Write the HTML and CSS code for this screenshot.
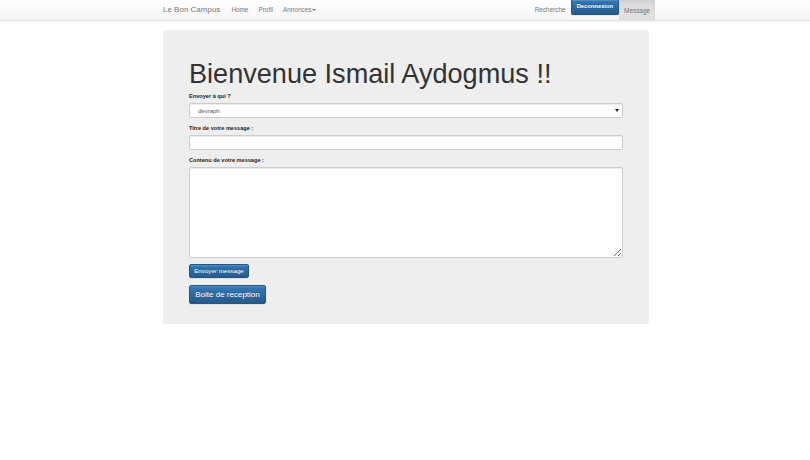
FILE: index.html
```
<!DOCTYPE html>
<html lang="fr">
<head>
    <meta charset="UTF-8">
    <title>Message - Le Bon Campus</title>
    <link rel="stylesheet" href="styles.css">
</head>
<body>

<!-- Navbar -->
<header class="navbar">
    <div class="container nav-inner">
        <a class="brand" href="#">Le Bon Campus</a>
        <nav class="menu">
            <a href="#">Home</a>
            <a href="#">Profil</a>
            <a href="#" class="dropdown">Annonces<span class="caret"></span></a>
        </nav>
        <nav class="menu menu-right">
            <a href="#">Recherche</a>
            <a href="#" class="btn btn-primary btn-logout">Deconnexion</a>
            <a href="#" class="active">Message</a>
        </nav>
    </div>
</header>

<!-- Message form -->
<div class="container">
    <div class="jumbotron">
        <h1>Bienvenue Ismail Aydogmus !!</h1>
        <form>
            <div class="form-group">
                <label for="dest">Envoyer à qui ?</label>
                <div class="select-wrap">
                    <select id="dest" class="form-control">
                        <option>devraph</option>
                    </select>
                </div>
            </div>
            <div class="form-group">
                <label for="titre">Titre de votre message :</label>
                <input type="text" id="titre" class="form-control">
            </div>
            <div class="form-group">
                <label for="contenu">Contenu de votre message :</label>
                <textarea id="contenu" class="form-control"></textarea>
            </div>
            <button type="button" class="btn btn-primary btn-sm">Envoyer message</button>
        </form>
        <a href="#" class="btn btn-primary btn-md">Boite de reception</a>
    </div>
</div>

</body>
</html>
```

FILE: styles.css
```
* {
    margin: 0;
    padding: 0;
    box-sizing: border-box;
}

body {
    font-family: "Liberation Sans", Arial, sans-serif;
    color: #333;
    background: #fff;
}

a {
    text-decoration: none;
}

.container {
    width: 488px;
    padding-left: 2px;
    margin: 0 auto;
}

/* Navbar */
.navbar {
    height: 21px;
    background: linear-gradient(to bottom, #fff 0%, #f5f5f5 100%);
    border-bottom: 1px solid #e4e4e4;
    box-shadow: 0 1px 3px rgba(0, 0, 0, 0.06);
}

.nav-inner {
    display: flex;
    align-items: stretch;
    height: 20px;
}

.brand {
    color: #777;
    font-size: 8px;
    line-height: 20px;
    margin-right: 6px;
}

.menu {
    display: flex;
    align-items: stretch;
}

.menu a {
    color: #777;
    font-size: 6.4px;
    line-height: 20px;
    padding: 0 5px;
}

.menu-right {
    margin-left: auto;
    margin-right: -6px;
}

.menu-right a {
    padding: 0 5px;
}

.caret {
    display: inline-block;
    margin-left: 1px;
    vertical-align: middle;
    border-top: 2px solid #777;
    border-left: 2px solid transparent;
    border-right: 2px solid transparent;
}

.menu .btn-logout {
    color: #fff;
    font-weight: bold;
    font-size: 5.8px;
    line-height: 13px;
    height: 15px;
    padding: 0 5px;
    border-radius: 0 0 2px 2px;
    border-top: none;
}

.menu .active {
    padding: 0 5px;
    background: linear-gradient(to bottom, #dbdbdb 0%, #e2e2e2 100%);
    box-shadow: inset 0 2px 4px rgba(0, 0, 0, 0.06);
    line-height: 22px;
}

/* Jumbotron */
.jumbotron {
    margin-top: 9px;
    background: #eee;
    border-radius: 3px;
    padding: 29px 26px 20px;
}

.jumbotron h1 {
    font-size: 27.1px;
    font-weight: normal;
    line-height: 30px;
    margin-bottom: 3px;
    color: #333;
    white-space: nowrap;
}

.form-group {
    margin-bottom: 6px;
}

label {
    display: block;
    font-size: 5.6px;
    font-weight: bold;
    line-height: 9px;
    margin-bottom: 2px;
    color: #222;
}

.form-control {
    display: block;
    width: 100%;
    height: 15px;
    border: 1px solid #ccc;
    border-radius: 2px;
    background: #fff;
    box-shadow: inset 0 1px 1px rgba(0, 0, 0, 0.075);
    font-family: "Liberation Sans", Arial, sans-serif;
    font-size: 6px;
    color: #555;
    padding: 0 8px;
    outline: none;
}

select.form-control {
    appearance: none;
    -webkit-appearance: none;
}

.select-wrap {
    position: relative;
}

.select-wrap::after {
    content: "";
    position: absolute;
    right: 4px;
    top: 6px;
    border-top: 3px solid #222;
    border-left: 2px solid transparent;
    border-right: 2px solid transparent;
}

textarea.form-control {
    height: 91px;
    padding: 3px 8px;
}

/* Buttons */
.btn {
    display: inline-block;
    color: #fff;
    border-radius: 2px;
    cursor: pointer;
    font-family: "Liberation Sans", Arial, sans-serif;
    text-align: center;
}

.btn-primary {
    background: linear-gradient(to bottom, #337ab7 0%, #265a88 100%);
    border: 1px solid #245580;
    text-shadow: 0 -1px 0 rgba(0, 0, 0, 0.2);
    box-shadow: inset 0 1px 0 rgba(255, 255, 255, 0.15), 0 1px 1px rgba(0, 0, 0, 0.075);
}

.btn-sm {
    display: block;
    margin-top: 1px;
    width: 60px;
    height: 14px;
    font-size: 6.2px;
    line-height: 12px;
}

.btn-md {
    display: block;
    margin-top: 7px;
    width: 77px;
    height: 19px;
    font-size: 8px;
    line-height: 17px;
}
```
